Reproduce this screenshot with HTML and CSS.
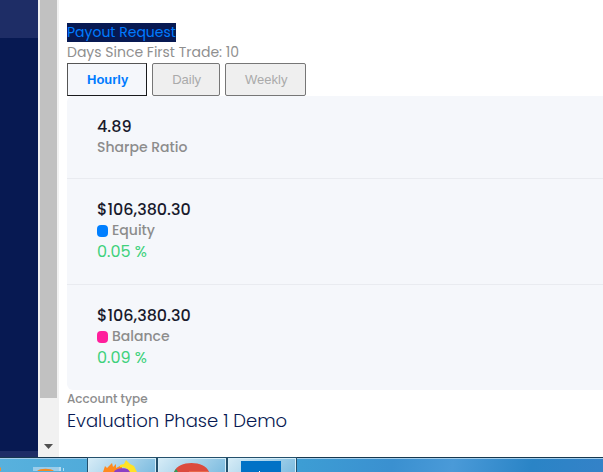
FILE: index.html
```html
<!DOCTYPE html>
<html lang="en">

<head>
	<meta charset="UTF-8">
	<meta name="viewport" content="width=device-width, initial-scale=1.0">
	<title>Account Overview</title>
	<link rel="stylesheet" href="styles.css">
</head>

<body>
	<div class="window">
		<nav class="sidebar">
			<div class="side-item"></div>
			<div class="side-footer"></div>
		</nav>
		<div class="scrollbar">
			<div class="thumb"></div>
			<svg class="arrow" width="9" height="5" viewBox="0 0 9 5">
				<path d="M0 0h9L4.500 5z" fill="#505050" />
			</svg>
		</div>
		<main class="content">
			<a class="payout" href="#">Payout Request</a>
			<div class="days">Days Since First Trade: 10</div>
			<div class="tabs">
				<button class="tab active">Hourly</button>
				<button class="tab" disabled>Daily</button>
				<button class="tab" disabled>Weekly</button>
			</div>
			<section class="stats">
				<div class="stat">
					<div class="value">4.89</div>
					<div class="label">Sharpe Ratio</div>
				</div>
				<div class="stat">
					<div class="value">$106,380.30</div>
					<div class="label"><span class="dot equity"></span>Equity</div>
					<div class="change">0.05 %</div>
				</div>
				<div class="stat">
					<div class="value">$106,380.30</div>
					<div class="label"><span class="dot balance"></span>Balance</div>
					<div class="change">0.09 %</div>
				</div>
			</section>
			<div class="account-label">Account type</div>
			<div class="account-type">Evaluation Phase 1 Demo</div>
		</main>
	</div>
	<footer class="taskbar">
		<div class="pinned">
			<svg width="86" height="13" viewBox="0 0 86 13">
				<path d="M0 9l1 1v3H0z" fill="#e8923a" />
				<path d="M33 9h26v4H33z" fill="#9bcdea" />
				<path d="M59 9h2v4h-2zM63 10h1v3h-1z" fill="#b5dcf0" />
				<path d="M37 13c3-3 14-3 17 0z" fill="#f08a24" />
			</svg>
		</div>
		<button class="task" aria-label="Firefox">
			<svg width="66" height="13" viewBox="0 0 66 13">
				<path d="M14 13l2-6 2 2 5-5 1 4 3-3v4l6-3v7z" fill="#ff8a1f" />
				<path d="M25 13c2-5 15-5 18 0z" fill="#8c3fc5" />
				<path d="M31 6l4-1 2-4 4 4 4 2 3 6h-7c-2-4-6-5-10-5z" fill="#ffe226" />
			</svg>
		</button>
		<button class="task" aria-label="Chrome">
			<svg width="66" height="13" viewBox="0 0 66 13">
				<path d="M15 13C19 1 46 1 50 13z" fill="#dc4b3e" />
				<path d="M15 13l2-3 2 3z" fill="#2f9d58" />
				<path d="M30 12h19v1H30z" fill="#e9674a" />
			</svg>
		</button>
		<button class="task" aria-label="Mail">
			<svg width="66" height="13" viewBox="0 0 66 13">
				<path d="M12 2h40v11H12z" fill="#0072c6" />
				<path d="M30 12h1v1h-1z" fill="#fff" />
			</svg>
		</button>
	</footer>
</body>

</html>
```

FILE: styles.css
```css
* {
	box-sizing: border-box;
}

body {
	margin: 0;
	height: 100vh;
	display: flex;
	flex-direction: column;
	overflow: hidden;
	background: #fff;
	color: #191a2c;
	font-family: Poppins, Inter, sans-serif;
	font-size: 14px;
	line-height: 20px;
}

.window {
	flex: 1;
	display: flex;
	min-height: 0;
}

.sidebar {
	width: 38px;
	display: flex;
	flex-direction: column;
	justify-content: space-between;
	background: #071952;
}

.side-item {
	height: 38px;
	background: #1e2d66;
}

.side-footer {
	height: 6px;
	background: #1e2d66;
}

.scrollbar {
	width: 21px;
	padding: 0 2px;
	display: flex;
	flex-direction: column;
	justify-content: space-between;
	align-items: center;
	background: #f1f1f1;
}

.thumb {
	width: 17px;
	height: 87%;
	background: #c1c1c1;
}

.arrow {
	display: block;
	margin-bottom: 8px;
}

.content {
	flex: 1;
	min-width: 0;
	padding: 23px 0 0 8px;
}

.payout {
	display: block;
	width: fit-content;
	line-height: 19px;
	background: #071952;
	color: #007bff;
	text-decoration: none;
}

.days {
	color: #8f8f8f;
}

.tabs {
	display: flex;
	gap: 5px;
	margin-top: 1px;
}

.tab {
	height: 33px;
	padding: 0 18px 0 19px;
	border: 1px solid #767676;
	border-radius: 2px;
	background: #efefef;
	color: #aaa;
	font-family: Arial, "Liberation Sans", sans-serif;
	font-size: 13px;
}

.tab.active {
	border-color: #555 #191a1c #191a1c #555;
	border-radius: 0;
	background: #f5f7fb;
	color: #007bff;
	font-weight: bold;
}

.stats {
	background: #f5f7fb;
	border-radius: 6px 0 0 6px;
}

.stat {
	padding: 20px 30px 21px;
	border-bottom: 1px solid #e9ebf0;
}

.stat:last-child {
	border-bottom: 0;
}

.value {
	font-size: 16px;
	line-height: 22px;
	font-weight: 500;
}

.label {
	display: flex;
	align-items: center;
	gap: 4px;
	line-height: 19px;
	color: #8c8c8c;
	font-weight: 500;
}

.dot {
	width: 11px;
	height: 12px;
	border-radius: 4px;
}

.equity {
	background: #007fff;
}

.balance {
	background: #ff1f9c;
}

.change {
	font-size: 16px;
	line-height: 23px;
	color: #3fd17c;
}

.account-label {
	font-size: 12px;
	line-height: 18px;
	font-weight: 500;
	color: #8c8c8c;
}

.account-type {
	font-size: 18px;
	line-height: 26px;
	font-weight: 300;
	color: #071952;
}

.taskbar {
	display: flex;
	gap: 2px;
	height: 15px;
	border-top: 1px solid #17384f;
	background: linear-gradient(100deg, #58b1dd 0%, #3d9dd4 50%, #3a90d0 65%, #4a9ad8 75%, #2a84c6 88%, #3482c8 100%);
	box-shadow: inset 0 1px #a4cdea;
}

.pinned {
	width: 86px;
	overflow: hidden;
}

.task {
	width: 68px;
	height: 14px;
	padding: 0;
	border: 1px solid #d5edf8;
	border-bottom: 0;
	outline: 1px solid #24506c;
	background: linear-gradient(135deg, #d5ebf6, #7dbce0);
	overflow: hidden;
}

.pinned svg,
.task svg {
	display: block;
}
```
